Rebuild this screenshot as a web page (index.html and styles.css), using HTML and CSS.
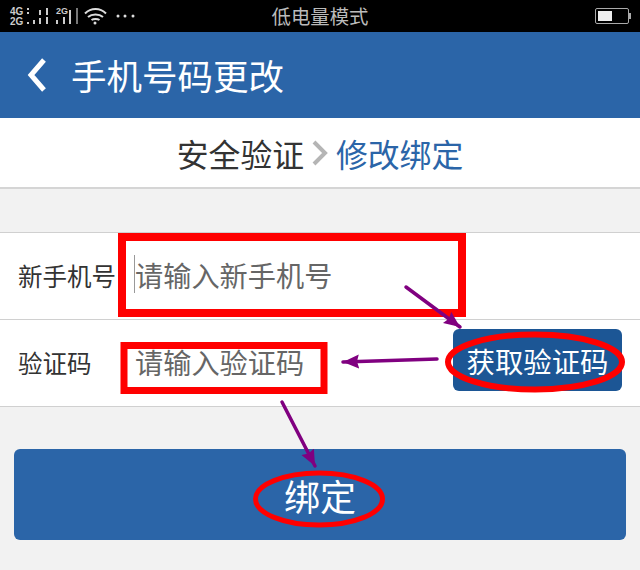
FILE: index.html
```html
<!DOCTYPE html>
<html lang="zh-CN">
<head>
  <meta charset="UTF-8">
  <meta name="viewport" content="width=device-width, initial-scale=1">
  <title>手机号码更改</title>
  <link rel="stylesheet" href="styles.css">
</head>
<body>
  <div class="page">
    <!-- status bar -->
    <div class="status-bar">
      <div class="status-left">
        <svg class="status-icons" width="140" height="32" viewBox="0 0 140 32">
          <g class="net-label">
            <text x="10" y="15">4G</text>
            <text x="10" y="25">2G</text>
            <text class="net-label-small" x="56" y="14">2G</text>
          </g>
          <g fill="#ccc">
            <rect x="27" y="8" width="2" height="2"/>
            <rect x="27" y="12" width="2" height="2"/>
            <rect x="27" y="22" width="2" height="2"/>
            <rect x="33" y="20" width="2" height="4"/>
            <rect x="39" y="10" width="2" height="5"/>
            <rect x="39" y="18" width="2" height="6"/>
            <rect x="46" y="8" width="2" height="7"/>
            <rect x="46" y="17" width="2" height="7"/>
            <rect x="56" y="20" width="2" height="4"/>
            <rect x="63" y="17" width="2" height="7"/>
            <rect x="69" y="10" width="2" height="14"/>
            <rect x="76" y="8" width="2" height="16" fill="#777"/>
          </g>
          <g fill="none" stroke="#ddd" stroke-width="2">
            <path d="M85 13.500c6-6 15-6 21 0"/>
            <path d="M88 17c4-3.500 11-3.500 15 0"/>
            <path d="M91.500 20c2-1.500 6-1.500 8 0"/>
          </g>
          <circle cx="95" cy="23" r="1.500" fill="#ddd"/>
          <g fill="#ddd">
            <circle cx="118" cy="16" r="1.500"/>
            <circle cx="125" cy="16" r="1.500"/>
            <circle cx="133" cy="16" r="1.500"/>
          </g>
        </svg>
      </div>
      <span class="status-title">低电量模式</span>
      <div class="status-right">
        <div class="battery"><div class="battery-level"></div></div>
        <div class="battery-tip"></div>
      </div>
    </div>

    <!-- header -->
    <header class="app-header">
      <svg class="back-icon" width="20" height="36" viewBox="0 0 20 36">
        <path d="M17 3 L4 18 L17 33" fill="none" stroke="#fff" stroke-width="5"/>
      </svg>
      <h1>手机号码更改</h1>
    </header>

    <!-- steps -->
    <div class="steps">
      <span class="step">安全验证</span>
      <svg class="step-arrow" width="16" height="26" viewBox="0 0 16 26">
        <path d="M2 2 L13 13 L2 24" fill="none" stroke="#b5b5b5" stroke-width="4"/>
      </svg>
      <span class="step step-active">修改绑定</span>
    </div>

    <!-- form -->
    <div class="form">
      <div class="form-row">
        <label class="form-label" for="phone">新手机号</label>
        <input class="form-input form-input-focus" id="phone" type="text" placeholder="请输入新手机号">
      </div>
      <div class="form-row">
        <label class="form-label" for="code">验证码</label>
        <input class="form-input" id="code" type="text" placeholder="请输入验证码">
        <button class="code-btn">获取验证码</button>
      </div>
    </div>

    <button class="submit-btn">绑定</button>

    <!-- annotations drawn over the screenshot -->
    <svg class="marks" width="640" height="570" viewBox="0 0 640 570">
      <defs>
        <marker id="head" markerUnits="userSpaceOnUse" markerWidth="18" markerHeight="16" refX="16" refY="7" orient="auto">
          <path d="M0 0 L16 7 L0 14 L2 7 Z" fill="#800080"/>
        </marker>
      </defs>
      <g fill="none" stroke="#ff0000">
        <rect x="122" y="237" width="340" height="76" stroke-width="8"/>
        <rect x="124" y="345.500" width="200" height="45" stroke-width="7"/>
        <ellipse cx="535" cy="362" rx="87" ry="27.500" stroke-width="6"/>
        <ellipse cx="319" cy="499" rx="63.500" ry="26" stroke-width="5"/>
      </g>
      <g stroke="#800080" stroke-width="3.500" stroke-linecap="round" fill="none">
        <path d="M406 287 L460 327" marker-end="url(#head)"/>
        <path d="M437 359 L343 362" marker-end="url(#head)"/>
        <path d="M282 402 L315 466" marker-end="url(#head)"/>
      </g>
    </svg>
  </div>
</body>
</html>
```

FILE: styles.css
```css
* {
  box-sizing: border-box;
}
body {
  margin: 0;
  padding: 0;
  font-family: "Noto Sans CJK SC", "Liberation Sans", sans-serif;
  background-color: #f2f2f2;
  color: #333;
}
.page {
  position: relative;
  width: 640px;
  height: 570px;
  overflow: hidden;
}
/* status bar */
.status-bar {
  display: grid;
  grid-template-columns: 1fr auto 1fr;
  align-items: center;
  height: 32px;
  background-color: #000;
  color: #bbb;
}
.status-left {
  display: flex;
  height: 32px;
}
.net-label {
  font-family: "Liberation Sans", sans-serif;
  font-size: 10px;
  font-weight: bold;
  fill: #ccc;
}
.net-label-small {
  font-size: 9px;
}
.status-title {
  font-size: 19.400px;
  line-height: 32px;
}
.status-right {
  display: flex;
  align-items: center;
  justify-content: flex-end;
  padding-right: 9px;
}
.battery {
  width: 34px;
  height: 16px;
  padding: 2px;
  border: 1px solid #aaa;
  border-radius: 2px;
}
.battery-level {
  width: 14px;
  height: 100%;
  background-color: #eee;
}
.battery-tip {
  width: 2px;
  height: 6px;
  background-color: #aaa;
}
/* header */
.app-header {
  display: flex;
  align-items: center;
  gap: 24px;
  height: 86px;
  padding-left: 27px;
  background-color: #2b65a8;
  color: #fff;
}
.app-header h1 {
  margin: 0;
  font-size: 35.500px;
  font-weight: normal;
  line-height: 86px;
}
/* steps */
.steps {
  display: flex;
  align-items: center;
  justify-content: center;
  gap: 8px;
  height: 71px;
  background-color: #fff;
  border-bottom: 2px solid #d5d5d5;
}
.step {
  font-size: 31.800px;
  color: #333;
}
.step-active {
  color: #2b65a8;
}
/* form */
.form {
  margin-top: 43px;
  background-color: #fff;
  border-bottom: 1px solid #d0d0d0;
}
.form-row {
  display: flex;
  align-items: center;
  height: 87px;
  padding: 0 18px;
  border-top: 1px solid #d0d0d0;
}
.form-label {
  flex: none;
  width: 116px;
  margin-bottom: 2px;
  font-size: 24.500px;
  color: #333;
}
.form-input {
  width: 205px;
  height: 38px;
  margin-bottom: 4px;
  padding: 0;
  border: none;
  border-left: 1px solid transparent;
  outline: none;
  font-family: inherit;
  font-size: 28.200px;
  background: transparent;
}
.form-input::placeholder {
  color: #666;
  opacity: 1;
}
.form-input-focus {
  border-left-color: #999;
}
.code-btn {
  flex: none;
  width: 169px;
  height: 62px;
  margin-left: auto;
  margin-bottom: 6px;
  border: none;
  border-radius: 6px;
  background-color: #1c5695;
  color: #fff;
  font-family: inherit;
  font-size: 28.400px;
}
.submit-btn {
  display: block;
  width: 612px;
  height: 91px;
  margin: 42px 14px 0;
  border: none;
  border-radius: 6px;
  background-color: #2b65a8;
  color: #fff;
  font-family: inherit;
  font-size: 36px;
}
/* annotations */
.marks {
  position: absolute;
  top: 0;
  left: 0;
}
```
